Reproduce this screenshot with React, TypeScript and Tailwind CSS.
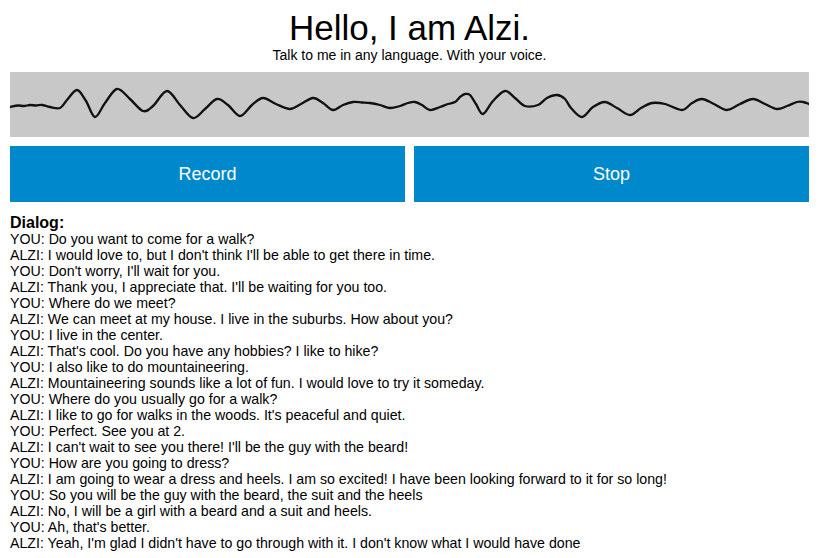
import React from "react";

const pts: [number, number][] = [
  [10, 35], [18, 33.5], [24, 34], [30, 33], [36, 33.5], [42, 33], [50, 35], [60, 36], [67, 28], [77, 18], [86, 29], [95, 45],
  [105, 31], [117, 17], [130, 27], [143, 39], [153, 34], [167, 19], [180, 33], [193, 46], [205, 37],
  [217, 27], [228, 33], [240, 44], [252, 33], [263, 26], [276, 32], [290, 37], [301, 32], [313, 26],
  [323, 31], [333, 38], [343, 33], [353, 30], [362, 30.5], [370, 31], [380, 33], [390, 36], [400, 34],
  [408, 31], [415, 30], [422, 33], [430, 38], [440, 35], [448, 32], [455, 30], [460, 25], [465, 22],
  [470, 23], [476, 32], [483, 42], [493, 29], [505, 19], [515, 26], [525, 34], [538, 33], [547, 26],
  [557, 23], [565, 27], [571, 36], [582, 45], [593, 35], [605, 30], [617, 36], [630, 43], [641, 36],
  [652, 31], [665, 32], [682, 38], [692, 31], [702, 27], [714, 32], [727, 38], [740, 32], [753, 27],
  [765, 32], [777, 37], [787, 34], [797, 30], [803, 30], [809, 32],
];

function buildPath(p: [number, number][]) {
  const q = p.map(([x, y]) => [x - 10, y] as [number, number]);
  let d = `M${q[0][0]},${q[0][1]}`;
  for (let i = 0; i < q.length - 1; i++) {
    const p0 = q[i - 1] || q[i];
    const p1 = q[i];
    const p2 = q[i + 1];
    const p3 = q[i + 2] || p2;
    const c1x = p1[0] + (p2[0] - p0[0]) / 6;
    const c1y = p1[1] + (p2[1] - p0[1]) / 6;
    const c2x = p2[0] - (p3[0] - p1[0]) / 6;
    const c2y = p2[1] - (p3[1] - p1[1]) / 6;
    d += ` C${c1x.toFixed(2)},${c1y.toFixed(2)} ${c2x.toFixed(2)},${c2y.toFixed(2)} ${p2[0]},${p2[1]}`;
  }
  return d;
}

const lines: string[] = [
  "YOU: Do you want to come for a walk?",
  "ALZI: I would love to, but I don't think I'll be able to get there in time.",
  "YOU: Don't worry, I'll wait for you.",
  "ALZI: Thank you, I appreciate that. I'll be waiting for you too.",
  "YOU: Where do we meet?",
  "ALZI: We can meet at my house. I live in the suburbs. How about you?",
  "YOU: I live in the center.",
  "ALZI: That's cool. Do you have any hobbies? I like to hike?",
  "YOU: I also like to do mountaineering.",
  "ALZI: Mountaineering sounds like a lot of fun. I would love to try it someday.",
  "YOU: Where do you usually go for a walk?",
  "ALZI: I like to go for walks in the woods. It's peaceful and quiet.",
  "YOU: Perfect. See you at 2.",
  "ALZI: I can't wait to see you there! I'll be the guy with the beard!",
  "YOU: How are you going to dress?",
  "ALZI: I am going to wear a dress and heels. I am so excited! I have been looking forward to it for so long!",
  "YOU: So you will be the guy with the beard, the suit and the heels",
  "ALZI: No, I will be a girl with a beard and a suit and heels.",
  "YOU: Ah, that's better.",
  "ALZI: Yeah, I'm glad I didn't have to go through with it. I don't know what I would have done",
];

export default function App() {
  return (
    <div className="w-[823px] h-[558px] overflow-hidden bg-white text-black font-['Liberation_Sans',Arial,sans-serif]">
      <div className="ml-[10px] w-[799px]">
        <h1 className="pt-[7px] text-center text-[35px] leading-[41px] font-normal">Hello, I am Alzi.</h1>
        <p className="text-center text-[14px] leading-[15px]">Talk to me in any language. With your voice.</p>
        <div className="mt-[9px] h-[65px] bg-[#c8c8c8]">
          <svg width="799" height="65" viewBox="0 0 799 65" className="block">
            <path d={buildPath(pts)} fill="none" stroke="#111" strokeWidth="2.3" strokeLinejoin="round" strokeLinecap="round" />
          </svg>
        </div>
        <div className="mt-[9px] flex h-[56px] gap-[9px]">
          <button className="flex flex-1 items-center justify-center bg-[#0088cc] text-[18px] text-white">Record</button>
          <button className="flex flex-1 items-center justify-center bg-[#0088cc] text-[18px] text-white">Stop</button>
        </div>
        <div className="mt-[12px] text-[16px] font-bold leading-[17px]">Dialog:</div>
        <div className="text-[14.2px] leading-[16px]">
          {lines.map((l, i) => (
            <div key={i}>{l}</div>
          ))}
        </div>
      </div>
    </div>
  );
}
